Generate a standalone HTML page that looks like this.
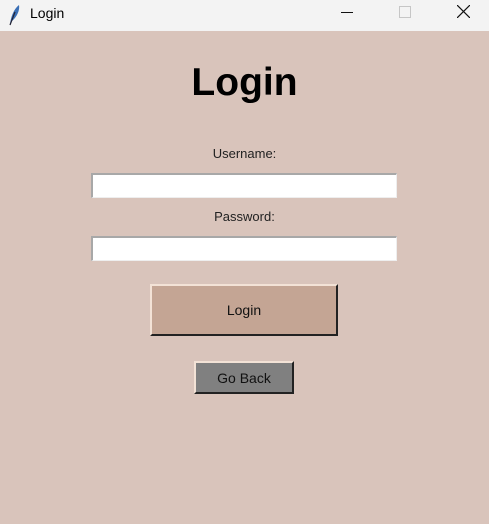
<!DOCTYPE html>
<html><head><style>
html,body{margin:0;padding:0;width:489px;height:524px;overflow:hidden;background:#d9c4bb;font-family:"Liberation Sans",sans-serif}
.tb{position:absolute;left:0;top:0;width:489px;height:31px;background:#f3f3f3}
.tb .t{position:absolute;left:30px;top:5px;font-size:14px;color:#000}
.ab{position:absolute}
.lbl{position:absolute;width:489px;text-align:center;font-size:13px;color:#222}
.in{position:absolute;left:91px;width:303px;height:22px;background:#fff;border-top:2px solid #a8a8a8;border-left:2px solid #a8a8a8;border-right:1px solid #eee;border-bottom:1px solid #eee}
.btn{position:absolute;box-sizing:border-box;text-align:center;font-size:14px;color:#111;border-top:2px solid #f3e2d6;border-left:2px solid #f3e2d6;border-right:2px solid #222;border-bottom:2px solid #222}
</style></head><body>
<div class="tb">
<svg class="ab" style="left:7px;top:4px" width="14" height="22" viewBox="0 0 14 22"><path d="M3 20 C4 12 7 5 12 1 C13 6 10 13 5 17 Z" fill="#3a6fb5"/><path d="M3 21 L8 8" stroke="#223" stroke-width="1.2"/></svg>
<div class="t">Login</div>
<div class="ab" style="left:341px;top:12px;width:12px;height:1px;background:#111"></div>
<div class="ab" style="left:399px;top:6px;width:10px;height:10px;border:1px solid #c6c6c6"></div>
<svg class="ab" style="left:457px;top:5px" width="13" height="13"><path d="M0 0L13 13M13 0L0 13" stroke="#111" stroke-width="1.2"/></svg>
</div>
<div class="ab" style="left:0;top:61px;width:489px;text-align:center;font-size:39px;font-weight:bold;color:#000">Login</div>
<div class="lbl" style="top:146px">Username:</div>
<div class="in" style="top:173px"></div>
<div class="lbl" style="top:209px">Password:</div>
<div class="in" style="top:236px"></div>
<div class="btn" style="left:150px;top:284px;width:188px;height:52px;line-height:49px;background:#c4a594">Login</div>
<div class="btn" style="left:194px;top:361px;width:100px;height:33px;line-height:30px;background:#808080">Go Back</div>
</body></html>
